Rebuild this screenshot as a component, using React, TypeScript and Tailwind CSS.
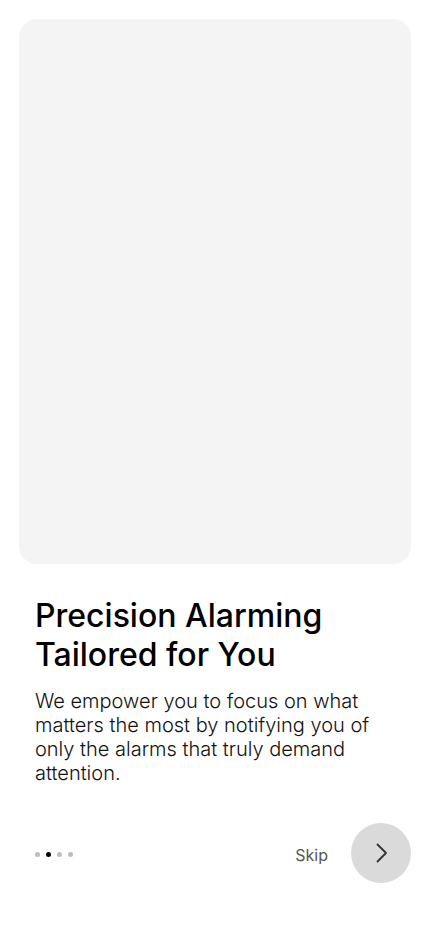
import React from "react";

export default function App() {
  return (
    <div
      className="w-[430px] h-[932px] bg-white flex flex-col px-[19px] pt-[19px]"
      style={{ fontFamily: "Inter, 'Noto Sans', sans-serif" }}
    >
      <div className="h-[545px] rounded-[18px] bg-[#f4f4f4]" />
      <div className="px-4 pt-[32px]">
        <h1 className="text-[32px] leading-[39px] font-medium text-black">
          Precision Alarming
          <br />
          Tailored for You
        </h1>
        <p className="mt-[15px] text-[20px] leading-[24px] font-light text-[#111]">
          We empower you to focus on what matters the most by notifying you of only the alarms that truly demand attention.
        </p>
      </div>
      <div className="mt-[38px] flex items-center pl-4">
        <div className="flex items-center gap-[6px] mt-[2px]">
          <span className="w-[5px] h-[5px] rounded-full bg-[#bdbdbd]" />
          <span className="w-[5px] h-[5px] rounded-full bg-black" />
          <span className="w-[5px] h-[5px] rounded-full bg-[#bdbdbd]" />
          <span className="w-[5px] h-[5px] rounded-full bg-[#bdbdbd]" />
        </div>
        <div className="flex-1" />
        <span className="text-[16px] text-[#555] mr-[23px] mt-[3px]">Skip</span>
        <button className="w-[60px] h-[60px] rounded-full bg-[#dadada] flex items-center justify-center">
          <svg width="24" height="24" viewBox="0 0 24 24" fill="none" stroke="#333" strokeWidth="1.8" strokeLinecap="round" strokeLinejoin="round">
            <path d="M8.5 3.5L17 12l-8.5 8.5" />
          </svg>
        </button>
      </div>
    </div>
  );
}
